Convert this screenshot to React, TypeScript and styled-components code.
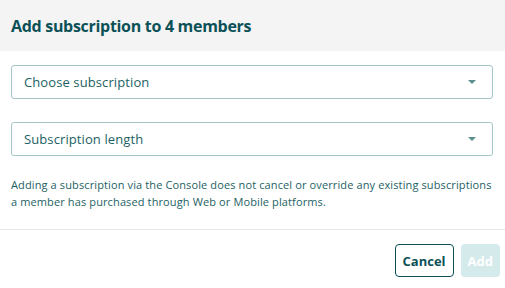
import styled, { createGlobalStyle } from "styled-components";

const GlobalStyle = createGlobalStyle`
  html, body {
    margin: 0;
    padding: 0;
    background: #fff;
  }
  body {
    font-family: "Open Sans", "Liberation Sans", sans-serif;
    color: #0c5157;
  }
`;

const Modal = styled.div`
  width: 505px;
  height: 288px;
  display: flex;
  flex-direction: column;
  overflow: hidden;
`;

const Header = styled.header`
  height: 51px;
  background: #f4f4f4;
  display: flex;
  align-items: center;
  padding: 0 11px;
  box-sizing: border-box;
`;

const Title = styled.h2`
  margin: 0;
  font-size: 16px;
  font-weight: 700;
  color: #0c5157;
  letter-spacing: -0.3px;
  padding-top: 1px;
`;

const Body = styled.div`
  padding: 14px 12px 0 11px;
  display: flex;
  flex-direction: column;
  gap: 23px;
`;

const Select = styled.div`
  height: 34px;
  box-sizing: border-box;
  border: 1px solid #a3c5c7;
  border-radius: 3px;
  display: flex;
  align-items: center;
  justify-content: space-between;
  padding: 0 16px 0 12px;
  font-size: 13px;
  color: #1d5f64;
  letter-spacing: 0.1px;
`;

const Caret = styled.span`
  width: 0;
  height: 0;
  border-left: 4px solid transparent;
  border-right: 4px solid transparent;
  border-top: 4px solid #5b8e91;
`;

const Note = styled.p`
  margin: 20px 12px 0 11px;
  font-size: 11px;
  line-height: 17px;
  letter-spacing: 0.12px;
  color: #1d5f64;
`;

const Divider = styled.hr`
  margin: 19px 0 0;
  border: none;
  border-top: 1px solid #e6e6e6;
`;

const Footer = styled.footer`
  display: flex;
  justify-content: flex-end;
  gap: 7px;
  padding: 14px 5px 0 0;
`;

const Button = styled.button<{ $variant: "outline" | "primary" }>`
  height: 33px;
  box-sizing: border-box;
  border-radius: 4px;
  font-family: inherit;
  font-size: 13px;
  font-weight: 700;
  padding: 0 7px;
  cursor: pointer;
  ${p =>
    p.$variant === "outline"
      ? `
    background: #fff;
    border: 1.5px solid #0c5157;
    color: #0c5157;
  `
      : `
    background: #d5eaeb;
    border: none;
    color: #fff;
  `}
`;

export default function App() {
  return (
    <>
      <GlobalStyle />
      <Modal>
        <Header>
          <Title>Add subscription to 4 members</Title>
        </Header>
        <Body>
          <Select>
            Choose subscription
            <Caret />
          </Select>
          <Select>
            Subscription length
            <Caret />
          </Select>
        </Body>
        <Note>
          Adding a subscription via the Console does not cancel or override any existing subscriptions
          a member has purchased through Web or Mobile platforms.
        </Note>
        <Divider />
        <Footer>
          <Button $variant="outline">Cancel</Button>
          <Button $variant="primary" disabled>
            Add
          </Button>
        </Footer>
      </Modal>
    </>
  );
}
